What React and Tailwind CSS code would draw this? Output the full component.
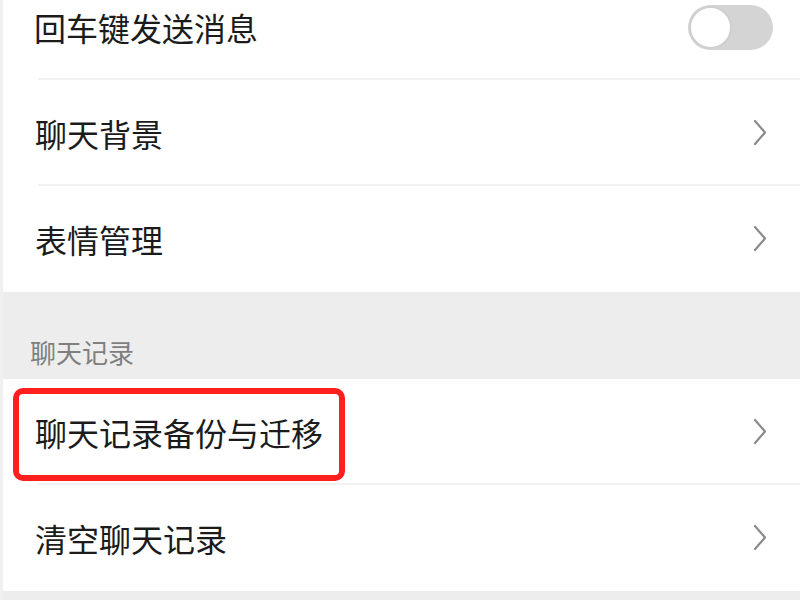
import React from "react";

function Chevron() {
  return (
    <svg width="16" height="28" viewBox="0 0 16 28" className="shrink-0">
      <path d="M3 2 L13 13.5 L3 25" fill="none" stroke="#8a8a8a" strokeWidth="2.2" strokeLinecap="round" strokeLinejoin="round" />
    </svg>
  );
}

function Row({ label, divider = true, children, extra }) {
  return (
    <div className="relative h-[106px] bg-white">
      <div className="flex h-full items-center justify-between pl-[32px] pr-[32px]">
        <span className="text-[32px] text-[#1b1b1b] leading-none">{label}</span>
        {children}
      </div>
      {divider && <div className="absolute bottom-0 left-[35px] right-0 h-[2px] bg-[#f1f1f1]" />}
      {extra}
    </div>
  );
}

export default function App() {
  return (
    <div
      className="w-[800px] h-[600px] overflow-hidden bg-[#ededed] border-l-[3px] border-[#f0f0f0]"
      style={{ fontFamily: '"Noto Sans CJK SC", "Noto Sans", sans-serif' }}
    >
      <div className="relative h-[80px] bg-white">
        <div className="flex h-full items-center justify-between pl-[31px] pr-[27px] pb-[26px]">
          <span className="text-[32px] text-[#1b1b1b] leading-none">回车键发送消息</span>
          <div className="relative h-[45px] w-[85px] rounded-full bg-[#d4d4d4]">
            <div className="absolute left-[1px] top-[1px] h-[43px] w-[43px] rounded-full bg-white border-[2px] border-[#cfcfcf]" />
          </div>
        </div>
        <div className="absolute bottom-0 left-[35px] right-0 h-[2px] bg-[#f1f1f1]" />
      </div>
      <Row label="聊天背景"><Chevron /></Row>
      <Row label="表情管理" divider={false}><Chevron /></Row>
      <div className="h-[87px] flex items-end pl-[27px] pb-[14px]">
        <span className="text-[26px] text-[#7f7f7f] leading-none">聊天记录</span>
      </div>
      <Row
        label="聊天记录备份与迁移"
        extra={<div className="absolute left-[10px] top-[9px] w-[332px] h-[93px] rounded-[10px] border-[6px] border-[#ff1f1f]" />}
      >
        <Chevron />
      </Row>
      <Row label="清空聊天记录" divider={false}><Chevron /></Row>
    </div>
  );
}
